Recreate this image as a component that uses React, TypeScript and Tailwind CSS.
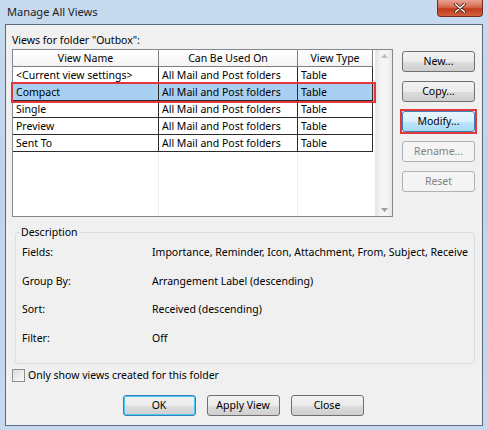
import React from "react";

const font = { fontFamily: '"Noto Sans", "Open Sans", sans-serif' };

function WinButton({
  label,
  variant = "normal",
  className = "",
}: {
  label: string;
  variant?: "normal" | "hover" | "disabled" | "default";
  className?: string;
}) {
  const base =
    "h-[21px] w-[73px] flex items-center justify-center rounded-[3px] border text-[10.5px] leading-none";
  const styles: Record<string, string> = {
    normal:
      "border-[#707070] bg-[linear-gradient(#f2f2f2_0%,#ebebeb_50%,#dddddd_51%,#cfcfcf_100%)] text-[#000]",
    default:
      "border-[#3c7fb1] bg-[linear-gradient(#f2f2f2_0%,#ebebeb_50%,#dddddd_51%,#cfcfcf_100%)] text-[#000] shadow-[inset_0_0_0_1px_#48c8f8]",
    hover:
      "border-[#3c7fb1] bg-[linear-gradient(#eaf6fd_0%,#d9f0fc_50%,#bee6fd_51%,#a7d9f5_100%)] text-[#000]",
    disabled: "border-[#adb2b5] bg-[#f4f4f4] text-[#838383]",
  };
  return <div className={`${base} ${styles[variant]} ${className}`}>{label}</div>;
}

const rows = [
  ["<Current view settings>", "All Mail and Post folders", "Table"],
  ["Compact", "All Mail and Post folders", "Table"],
  ["Single", "All Mail and Post folders", "Table"],
  ["Preview", "All Mail and Post folders", "Table"],
  ["Sent To", "All Mail and Post folders", "Table"],
];

export default function App() {
  return (
    <div
      className="w-[488px] h-[430px] overflow-hidden bg-[linear-gradient(180deg,#c7daee_0%,#bfd4eb_40%,#c6d9ee_100%)] text-[#000]"
      style={font}
    >
      {/* Title bar */}
      <div className="h-[24px] flex items-start">
        <div className="pl-[7px] pt-[3px] text-[11.1px] leading-[18px] text-[#1e1e1e]">
          Manage All Views
        </div>
        <div className="ml-auto mr-[5px] w-[46px] h-[17px] rounded-b-[4px] border border-t-0 border-[#7c2a1f] bg-[linear-gradient(#e8a493_0%,#d5694f_45%,#c23a1c_55%,#d2603f_100%)] flex items-center justify-center">
          <svg width="12" height="10" viewBox="0 0 12 10">
            <path d="M1.5 1 L10.5 9 M10.5 1 L1.5 9" stroke="#3b140c" strokeWidth="3" strokeLinecap="round" />
            <path d="M1.5 1 L10.5 9 M10.5 1 L1.5 9" stroke="#ffffff" strokeWidth="1.6" strokeLinecap="round" />
          </svg>
        </div>
      </div>

      {/* Client area */}
      <div className="mx-[5px] h-[402px] border border-[#5b6a7c] bg-[#f0f0f0] pl-[6px] pr-[6px] pt-[6px] text-[10.5px]">
        <div className="h-[18px] leading-[18px]">Views for folder "Outbox":</div>

        <div className="flex">
          {/* Table */}
          <div className="relative w-[381px] h-[168px] border border-[#828790] bg-white flex">
            <div className="w-[362px] flex flex-col">
              {/* header */}
              <div className="flex h-[17px] leading-[16px]">
                <div className="w-[146px] border-r border-b border-[#7f7f7f] text-center bg-[linear-gradient(#ffffff,#f3f3f3)]">
                  View Name
                </div>
                <div className="w-[139px] border-r border-b border-[#7f7f7f] text-center bg-[linear-gradient(#ffffff,#f3f3f3)]">
                  Can Be Used On
                </div>
                <div className="w-[75px] border-r border-b border-[#7f7f7f] text-center bg-[linear-gradient(#ffffff,#f3f3f3)]">
                  View Type
                </div>
              </div>
              {rows.map((r, i) => (
                <div
                  key={i}
                  className={`relative flex h-[17px] leading-[16px] ${i === 1 ? "bg-[#a9d0f0]" : ""}`}
                >
                  <div className="w-[146px] border-r border-b border-[#2b2b2b] pl-[3px] whitespace-nowrap overflow-hidden">
                    {r[0]}
                  </div>
                  <div className="w-[139px] border-r border-b border-[#2b2b2b] pl-[3px] whitespace-nowrap overflow-hidden">
                    {r[1]}
                  </div>
                  <div className="w-[75px] border-r border-b border-[#2b2b2b] pl-[3px] whitespace-nowrap overflow-hidden">
                    {r[2]}
                  </div>
                </div>
              ))}
              <div className="flex flex-1">
                <div className="w-[146px] border-r border-[#f0f0f0]" />
                <div className="w-[139px] border-r border-[#f0f0f0]" />
              </div>
            </div>
            {/* scrollbar */}
            <div className="ml-auto w-[17px] h-full bg-[linear-gradient(90deg,#e6e6e6,#f4f4f4_30%,#f4f4f4_70%,#e6e6e6)] border-l border-[#e8e8e8] flex flex-col justify-between items-center py-[4px]">
              <svg width="7" height="4" viewBox="0 0 7 4">
                <path d="M0 4 L3.5 0 L7 4 Z" fill="#bcbcbc" />
              </svg>
              <svg width="7" height="4" viewBox="0 0 7 4">
                <path d="M0 0 L3.5 4 L7 0 Z" fill="#9c9c9c" />
              </svg>
            </div>
            {/* red highlight */}
            <div className="absolute left-[-2px] top-[32px] w-[365px] h-[21px] border-2 border-[#e0383c] pointer-events-none" />
          </div>

          {/* Right buttons */}
          <div className="ml-[9px] mt-[2px] flex flex-col gap-[9px]">
            <WinButton label="New..." />
            <WinButton label="Copy..." />
            <div className="relative">
              <WinButton label="Modify..." variant="hover" />
              <div className="absolute -left-[2px] -top-[2px] -right-[2px] -bottom-[2px] border-2 border-[#e0383c] pointer-events-none" />
            </div>
            <WinButton label="Rename..." variant="disabled" />
            <WinButton label="Reset" variant="disabled" />
          </div>
        </div>

        {/* Description group */}
        <div className="relative mt-[15px] ml-[3px] w-[460px] h-[132px] rounded-[3px] border border-[#d5dfe5]">
          <div className="absolute left-[4px] -top-[9px] px-[1px] bg-[#f0f0f0] leading-[16px]">
            Description
          </div>
          <div className="pt-[11px] pl-[6px] leading-[17px] flex flex-col gap-[11.7px]">
            {[
              ["Fields:", "Importance, Reminder, Icon, Attachment, From, Subject, Receive"],
              ["Group By:", "Arrangement Label (descending)"],
              ["Sort:", "Received (descending)"],
              ["Filter:", "Off"],
            ].map(([k, v]) => (
              <div key={k} className="flex h-[17px]">
                <div className="w-[130px] shrink-0">{k}</div>
                <div className="whitespace-nowrap">{v}</div>
              </div>
            ))}
          </div>
        </div>

        {/* Checkbox */}
        <div className="mt-[4px] flex items-center h-[15px]">
          <div className="w-[13px] h-[13px] border border-[#8e8f8f] bg-[linear-gradient(135deg,#dcdcdc,#fbfbfb)]" />
          <div className="ml-[3px] leading-[15px]">Only show views created for this folder</div>
        </div>

        {/* Bottom buttons */}
        <div className="mt-[12px] flex justify-center gap-[11px] pr-[2px]">
          <WinButton label="OK" variant="default" />
          <WinButton label="Apply View" />
          <WinButton label="Close" />
        </div>
      </div>
    </div>
  );
}
